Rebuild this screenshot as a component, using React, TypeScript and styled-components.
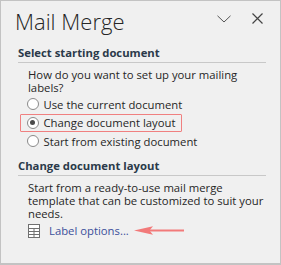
import React from 'react';
import styled, { createGlobalStyle } from 'styled-components';

const Global = createGlobalStyle`
  html, body {
    margin: 0;
    padding: 0;
    background: #f0f0f0;
  }
  body {
    font-family: "Open Sans", "Noto Sans", sans-serif;
  }
`;

const Pane = styled.div`
  box-sizing: border-box;
  width: 281px;
  height: 265px;
  background: #f0f0f0;
  border: 1px solid #c3c3c3;
  border-bottom-width: 2px;
  padding: 0 14px 0 17px;
  color: #262626;
`;

const Header = styled.div`
  display: flex;
  align-items: center;
  height: 41px;
  margin-left: -3px;
`;

const Title = styled.h1`
  flex: 1;
  margin: 0;
  font-size: 22px;
  font-weight: 300;
  line-height: 41px;
  color: #262626;
`;

const HeaderButton = styled.button<{ $size: number }>`
  width: ${p => p.$size}px;
  height: 16px;
  padding: 0;
  margin: 0 0 6px 0;
  border: none;
  background: transparent;
  display: flex;
  align-items: center;
  justify-content: center;
`;

const Section = styled.section<{ $gap: number }>`
  margin-top: ${p => p.$gap}px;
`;

const SectionTitle = styled.h2`
  margin: 0;
  font-size: 11.3px;
  line-height: 16px;
  font-weight: 700;
  color: #2b3a4a;
  padding-bottom: 1px;
  border-bottom: 1px solid #c8c8c8;
`;

const Body = styled.div`
  padding-left: 10px;
  padding-top: 5px;
  font-size: 11.3px;
  line-height: 13px;
  color: #262626;
`;

const Options = styled.div`
  display: flex;
  flex-direction: column;
  margin-left: -8px;
  margin-top: 1px;
`;

const Option = styled.label<{ $highlight?: boolean }>`
  box-sizing: border-box;
  display: flex;
  align-items: center;
  gap: 5px;
  height: 18.5px;
  padding: 0 6px 0 5.5px;
  width: fit-content;
  border: 1.5px solid ${p => (p.$highlight ? '#f08080' : 'transparent')};
  border-radius: 1px;
`;

const Radio = styled.span<{ $checked?: boolean }>`
  box-sizing: border-box;
  width: 12px;
  height: 12px;
  border-radius: 50%;
  border: 1px solid #8a8a8a;
  background: #fff;
  display: flex;
  align-items: center;
  justify-content: center;
  &::after {
    content: '';
    width: 5px;
    height: 5px;
    border-radius: 50%;
    background: ${p => (p.$checked ? '#4a4a4a' : 'transparent')};
  }
`;

const LinkRow = styled.div`
  display: flex;
  align-items: center;
  height: 16px;
  margin-top: 3px;
  gap: 9px;
`;

const Link = styled.a`
  color: #3b4f9b;
  text-decoration: none;
`;

const Pointer = styled.svg`
  margin-left: -4px;
`;

const App = () => (
  <>
    <Global />
    <Pane>
      <Header>
        <Title>Mail Merge</Title>
        <HeaderButton $size={14} aria-label="Options">
          <svg width="14" height="8" viewBox="0 0 14 8">
            <path d="M0.5 0.8 L7 7 L13.5 0.8" fill="none" stroke="#555" strokeWidth="1" />
          </svg>
        </HeaderButton>
        <HeaderButton $size={11} style={{ margin: '0 3px 6px 21px' }} aria-label="Close">
          <svg width="11" height="11" viewBox="0 0 11 11">
            <path d="M0.5 0.5 L10.5 10.5 M10.5 0.5 L0.5 10.5" stroke="#444" strokeWidth="1.2" />
          </svg>
        </HeaderButton>
      </Header>

      <Section $gap={3}>
        <SectionTitle>Select starting document</SectionTitle>
        <Body>
          How do you want to set up your mailing labels?
          <Options>
            <Option>
              <Radio />
              Use the current document
            </Option>
            <Option $highlight>
              <Radio $checked />
              Change document layout
            </Option>
            <Option>
              <Radio />
              Start from existing document
            </Option>
          </Options>
        </Body>
      </Section>

      <Section $gap={7}>
        <SectionTitle>Change document layout</SectionTitle>
        <Body>
          Start from a ready-to-use mail merge template that can be customized to suit your needs.
          <LinkRow>
            <svg width="12" height="14" viewBox="0 0 12 14">
              <rect x="0.5" y="0.5" width="11" height="13" fill="#fff" stroke="#707070" />
              <path d="M0.5 4.5 H11.5 M0.5 7.5 H11.5 M0.5 10.5 H11.5 M6 4.5 V13.5" stroke="#707070" />
            </svg>
            <Link href="#">Label options...</Link>
            <Pointer width="51" height="9" viewBox="0 0 51 9">
              <path d="M12 4.5 H50" stroke="#f27a7a" strokeWidth="2" />
              <path d="M0 4.5 L19 0.3 L15.5 4.5 L19 8.7 Z" fill="#f27a7a" />
            </Pointer>
          </LinkRow>
        </Body>
      </Section>
    </Pane>
  </>
);

export default App;
